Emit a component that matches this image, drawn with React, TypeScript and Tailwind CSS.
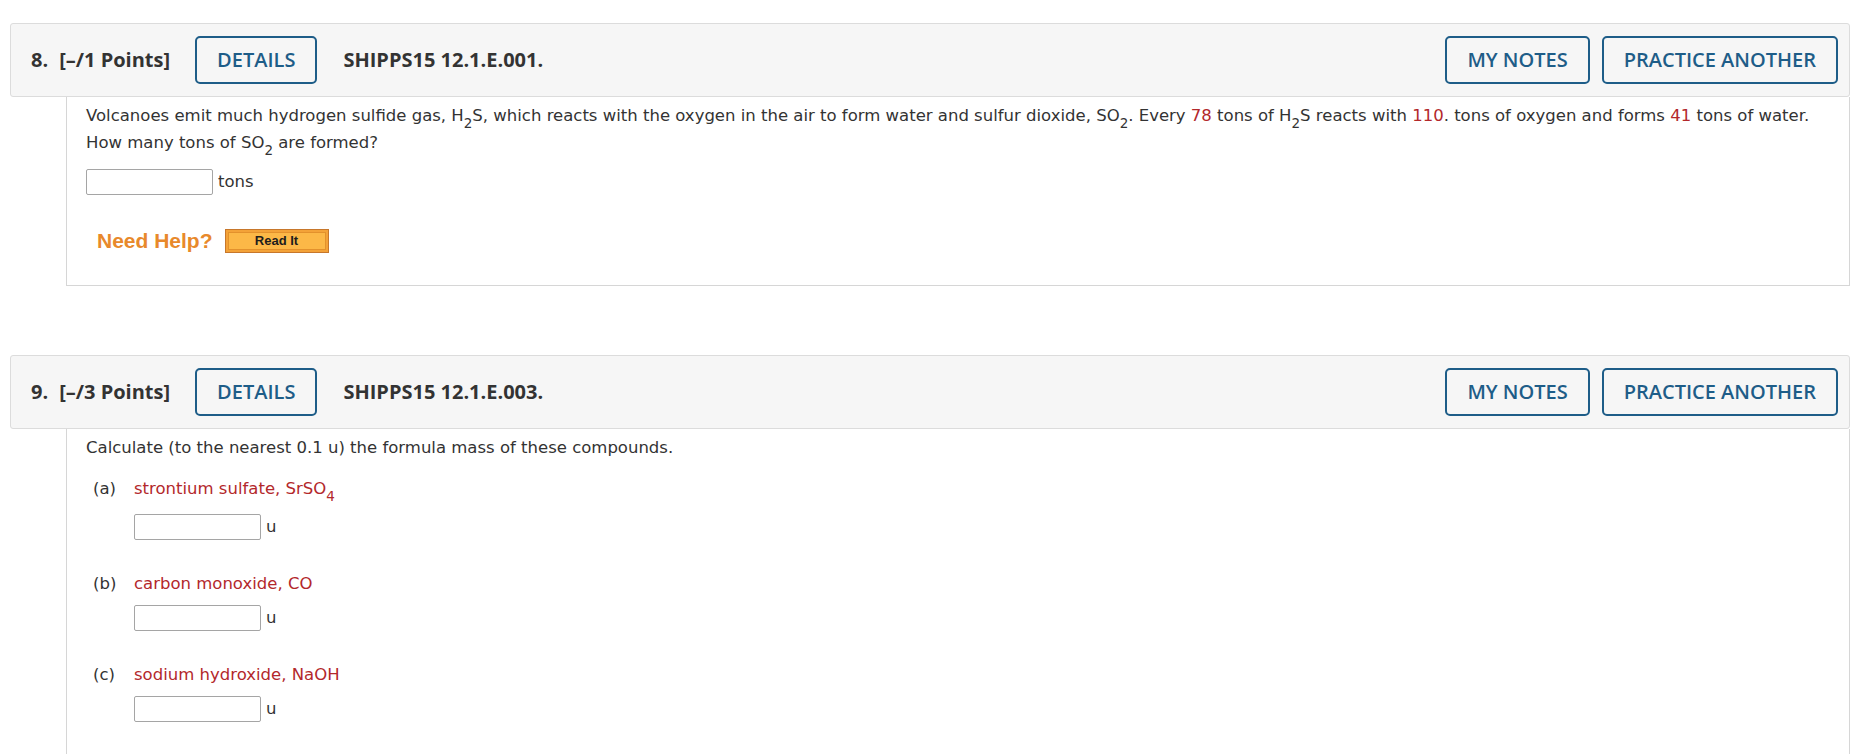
import { ReactNode } from 'react';

const Red = ({ children }: { children: ReactNode }) => <span className="text-[#b3282b]">{children}</span>;

const Sub = ({ children }: { children: ReactNode }) => <sub className="-bottom-[7px] text-[13.5px]">{children}</sub>;

function HeaderButton({ label }: { label: string }) {
    return (
        <button className="flex h-[48px] items-center rounded-[5px] border-2 border-[#1e5d88] px-[20px] text-[20px] font-semibold text-[#1e5d88]">
            {label}
        </button>
    );
}

function QuestionHeader({ num, points, code }: { num: string; points: string; code: string }) {
    return (
        <div className="flex h-[74px] items-center rounded-[3px] border border-[#dcdcdc] bg-[#f6f6f6] pr-[11px] pl-[20px] font-['Open_Sans',sans-serif] text-[#333]">
            <span className="text-[20px] font-bold">{num}</span>
            <span className="ml-[11px] text-[20px] font-bold">{points}</span>
            <div className="ml-[25px]">
                <HeaderButton label="DETAILS" />
            </div>
            <span className="ml-[26px] text-[20px] font-bold">{code}</span>
            <div className="ml-auto flex gap-[12px]">
                <HeaderButton label="MY NOTES" />
                <HeaderButton label="PRACTICE ANOTHER" />
            </div>
        </div>
    );
}

function AnswerBox({ unit }: { unit: string }) {
    return (
        <div className="flex items-center gap-[5px]">
            <input type="text" className="h-[26px] w-[127px] rounded-[2px] border border-[#a5a5a5] bg-white" />
            <span>{unit}</span>
        </div>
    );
}

const parts = [
    { letter: '(a)', name: 'strontium sulfate, SrSO', sub: '4', top: 'mt-[14px]', inputTop: 'mt-[11px]' },
    { letter: '(b)', name: 'carbon monoxide, CO', sub: '', top: 'mt-[30px]', inputTop: 'mt-[7px]' },
    { letter: '(c)', name: 'sodium hydroxide, NaOH', sub: '', top: 'mt-[30px]', inputTop: 'mt-[7px]' },
];

export default function App() {
    return (
        <div className="h-[754px] overflow-hidden bg-white pt-[23px] pr-[6px] pl-[10px]">
            <QuestionHeader num="8." points="[–/1 Points]" code="SHIPPS15 12.1.E.001." />
            <div className="ml-[56px] border-x border-b border-[#d6d6d6] pt-[5px] pb-[31px] pl-[19px] font-['DejaVu_Sans',Verdana,sans-serif] text-[16.5px] leading-[27px] text-[#333]">
                <p>
                    Volcanoes emit much hydrogen sulfide gas, H<Sub>2</Sub>S, which reacts with the oxygen in the air to form water and sulfur
                    dioxide, SO<Sub>2</Sub>. Every <Red>78</Red> tons of H<Sub>2</Sub>S reacts with <Red>110</Red>. tons of oxygen and forms{' '}
                    <Red>41</Red> tons of water.
                    <br />
                    How many tons of SO<Sub>2</Sub> are formed?
                </p>
                <div className="mt-[12px]">
                    <AnswerBox unit="tons" />
                </div>
                <div className="mt-[32px] flex items-center gap-[12px] pl-[11px]">
                    <span className="font-['Liberation_Sans',Arial,sans-serif] text-[21px] font-bold text-[#e8892b]">Need Help?</span>
                    <button className="h-[24px] w-[104px] border border-[#c7772b] bg-[#f3a238] p-[2px]">
                        <div className="flex h-full items-center justify-center border border-[#e3912c] bg-[#fcb847] font-['Liberation_Sans',Arial,sans-serif] text-[13px] font-bold text-[#1d1d1d]">
                            Read It
                        </div>
                    </button>
                </div>
            </div>

            <div className="mt-[69px]">
                <QuestionHeader num="9." points="[–/3 Points]" code="SHIPPS15 12.1.E.003." />
                <div className="ml-[56px] border-x border-b border-[#d6d6d6] pt-[5px] pb-[60px] pl-[19px] font-['DejaVu_Sans',Verdana,sans-serif] text-[16.5px] leading-[27px] text-[#333]">
                    <p>Calculate (to the nearest 0.1 u) the formula mass of these compounds.</p>
                    {parts.map((p) => (
                        <div key={p.letter}>
                            <div className={`${p.top} flex pl-[7px]`}>
                                <span className="w-[41px]">{p.letter}</span>
                                <Red>
                                    {p.name}
                                    {p.sub && <Sub>{p.sub}</Sub>}
                                </Red>
                            </div>
                            <div className={`${p.inputTop} pl-[48px]`}>
                                <AnswerBox unit="u" />
                            </div>
                        </div>
                    ))}
                </div>
            </div>
        </div>
    );
}
